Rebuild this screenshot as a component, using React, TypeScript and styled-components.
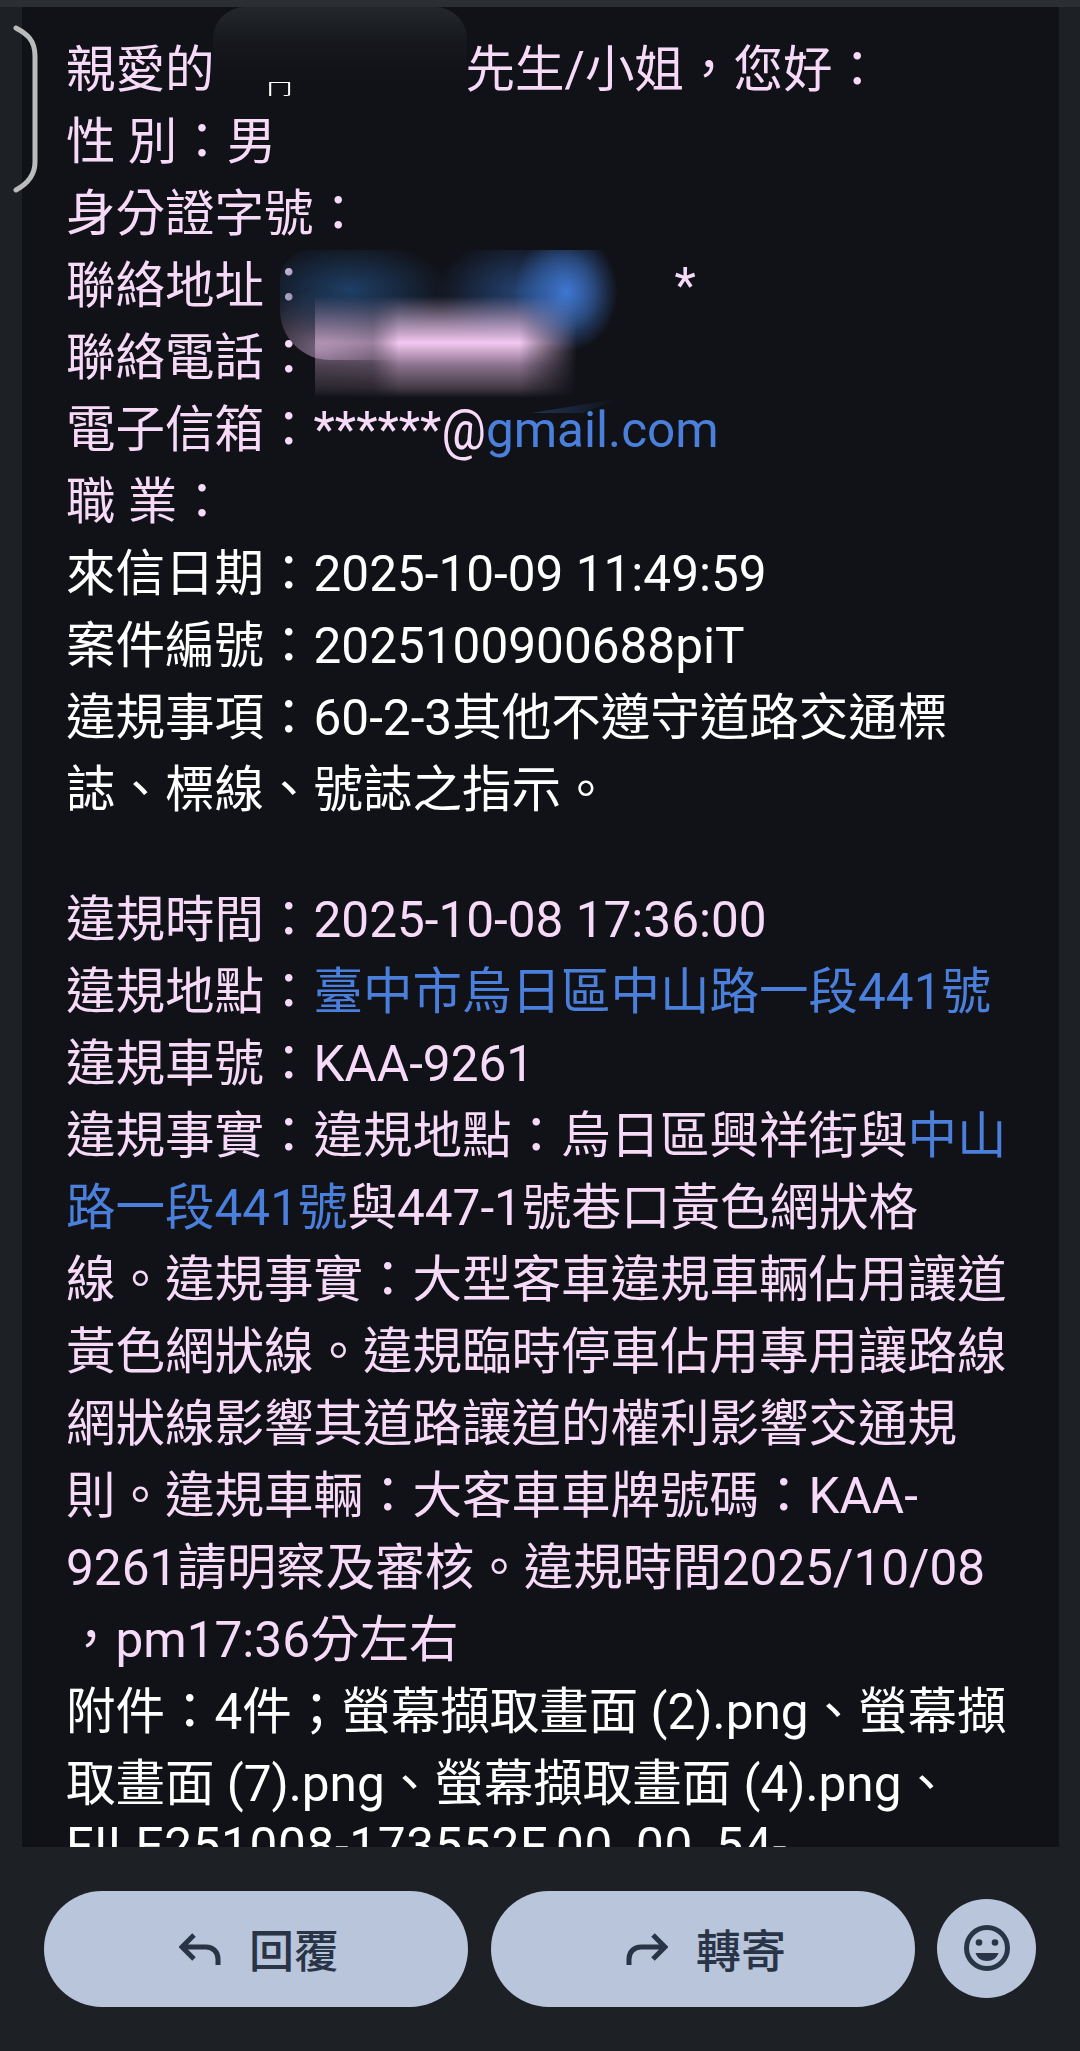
import React from 'react';
import styled, { createGlobalStyle } from 'styled-components';

const GlobalStyle = createGlobalStyle`
  html, body {
    margin: 0;
    padding: 0;
    background: #1d2025;
  }
`;

export default function App() {
  return (
    <>
      <GlobalStyle />
      <Screen>
        <TopStrip />
        <Handle width='26' height='170' viewBox='0 0 26 170'>
          <path
            d='M3 4 C14 10 22 16 22 32 V138 C22 152 14 160 3 166'
            fill='none'
            stroke='#b9bcba'
            strokeWidth='5'
            strokeLinecap='round'
          />
        </Handle>
        <Message>
          <Line>
            親愛的
            <Redacted $width={251}>
              <Remnant>冂</Remnant>
            </Redacted>
            先生/小姐，您好：
          </Line>
          <Line>性 別：男</Line>
          <Line>身分證字號：</Line>
          <Line>
            聯絡地址：
            <Redacted $width={361} />*
          </Line>
          <Line>聯絡電話：</Line>
          <Line>
            電子信箱：******<At>@</At>
            <Link>gmail.com</Link>
          </Line>
          <Line>職 業：</Line>
          <Line $white>來信日期：2025-10-09 11:49:59</Line>
          <Line $white>案件編號：2025100900688piT</Line>
          <Line $white>違規事項：60-2-3其他不遵守道路交通標</Line>
          <Line $white>誌、標線、號誌之指示。</Line>
          <BlankLine />
          <Line>違規時間：2025-10-08 17:36:00</Line>
          <Line>
            違規地點：<Link>臺中市烏日區中山路一段441號</Link>
          </Line>
          <Line>違規車號：KAA-9261</Line>
          <Line>
            違規事實：違規地點：烏日區興祥街與<Link>中山</Link>
          </Line>
          <Line>
            <Link>路一段441號</Link>與447-1號巷口黃色網狀格
          </Line>
          <Line>線。違規事實：大型客車違規車輛佔用讓道</Line>
          <Line>黃色網狀線。違規臨時停車佔用專用讓路線</Line>
          <Line>網狀線影響其道路讓道的權利影響交通規</Line>
          <Line>則。違規車輛：大客車車牌號碼：KAA-</Line>
          <Line>9261請明察及審核。違規時間2025/10/08</Line>
          <Line>，pm17:36分左右</Line>
          <Line $white>附件：4件；螢幕擷取畫面 (2).png、螢幕擷</Line>
          <Line $white>取畫面 (7).png、螢幕擷取畫面 (4).png、</Line>
          <ClippedLine $white>FILE251008-173552F.00_00_54-</ClippedLine>
          <NameMask />
          <SmudgeBlue />
          <SmudgePink />
          <SmudgeTail />
        </Message>
        <Actions>
          <PillButton>
            <svg width='42' height='34' viewBox='0 0 42 34' fill='none'>
              <path
                d='M15 3 L3 15 L15 27 M3 15 H27 C34 15 39 20 39 27 V33'
                stroke='#2a3447'
                strokeWidth='5'
              />
            </svg>
            回覆
          </PillButton>
          <PillButton>
            <svg width='42' height='34' viewBox='0 0 42 34' fill='none'>
              <path
                d='M27 3 L39 15 L27 27 M39 15 H15 C8 15 3 20 3 27 V33'
                stroke='#2a3447'
                strokeWidth='5'
              />
            </svg>
            轉寄
          </PillButton>
          <RoundButton>
            <svg width='48' height='48' viewBox='0 0 48 48' fill='none'>
              <circle cx='24' cy='24' r='20.5' stroke='#2a3447' strokeWidth='5' />
              <circle cx='16' cy='18.5' r='3.3' fill='#2a3447' />
              <circle cx='32' cy='18.5' r='3.3' fill='#2a3447' />
              <path d='M12.5 29 H35.5 C34 34 29.5 37 24 37 C18.5 37 14 34 12.5 29 Z' fill='#2a3447' />
            </svg>
          </RoundButton>
        </Actions>
      </Screen>
    </>
  );
}

const Screen = styled.div`
  position: relative;
  width: 1080px;
  height: 2051px;
  overflow: hidden;
  display: flex;
  flex-direction: column;
  background: #1d2025;
  font-family: Roboto, 'Noto Sans CJK TC', sans-serif;
`;

const TopStrip = styled.div`
  height: 7px;
  flex: none;
  background: #2b2f34;
`;

const Handle = styled.svg`
  position: absolute;
  z-index: 1;
  left: 13px;
  top: 24px;
`;

const Message = styled.div`
  position: relative;
  flex: none;
  height: 1840px;
  margin: 0 21px 0 22px;
  padding: 27px 0 0 44px;
  box-sizing: border-box;
  overflow: hidden;
  background: #111218;
`;

const Line = styled.div<{ $white?: boolean }>`
  height: 72px;
  line-height: 72px;
  font-size: 49.5px;
  white-space: pre;
  color: ${(p) => (p.$white ? '#ffffff' : '#f6daf8')};
`;

const ClippedLine = styled(Line)`
  margin-top: -10px;
  letter-spacing: 0.64px;
`;

const BlankLine = styled.div`
  height: 58px;
`;

const Link = styled.span`
  color: #4a80dc;
`;

const At = styled.span`
  display: inline-block;
  transform: scaleY(1.14);
`;

const Redacted = styled.span<{ $width: number }>`
  position: relative;
  display: inline-block;
  width: ${(p) => p.$width}px;
  height: 1px;
`;

const Remnant = styled.span`
  position: absolute;
  left: 52px;
  top: -14px;
  font-size: 26px;
  line-height: 24px;
  color: #ffffff;
  transform: scaleY(0.55);
  transform-origin: bottom;
`;

const NameMask = styled.div`
  position: absolute;
  left: 191px;
  top: 0;
  width: 254px;
  height: 73px;
  border-radius: 32px 32px 0 0;
  background: linear-gradient(#24282d, #15171c 50%, #111218);
`;

const SmudgeBlue = styled.div`
  position: absolute;
  left: 258px;
  top: 243px;
  width: 340px;
  height: 110px;
  border-radius: 30px 0 0 50px;
  background:
    radial-gradient(ellipse 52px 60px at 286px 42px, #3f78d2, rgba(63, 120, 210, 0.5) 55%, rgba(63, 120, 210, 0) 100%),
    radial-gradient(ellipse 85px 55px at 240px 42px, rgba(40, 75, 130, 0.85), rgba(40, 75, 130, 0) 100%),
    radial-gradient(ellipse 100px 50px at 70px 40px, #1f3f66, rgba(31, 63, 102, 0) 100%),
    radial-gradient(ellipse 80px 60px at 40px 100px, rgba(135, 115, 145, 0.85), rgba(125, 105, 135, 0) 100%);
`;

const SmudgePink = styled.div`
  position: absolute;
  left: 293px;
  top: 289px;
  width: 262px;
  height: 102px;
  background: linear-gradient(
    rgba(170, 150, 190, 0),
    rgba(205, 175, 215, 0.7) 26%,
    #f4c8f2 46%,
    rgba(190, 155, 190, 0.7) 68%,
    rgba(120, 100, 120, 0.5) 90%,
    rgba(110, 90, 110, 0)
  );
  mask-image: linear-gradient(
    90deg,
    rgba(0, 0, 0, 0.5),
    rgba(0, 0, 0, 0.55) 22%,
    #000 32%,
    #000 78%,
    rgba(0, 0, 0, 0.45) 90%,
    transparent
  );
`;

const SmudgeTail = styled.div`
  position: absolute;
  left: 510px;
  top: 392px;
  width: 85px;
  height: 14px;
  background: linear-gradient(90deg, rgba(47, 85, 140, 0.5), rgba(47, 85, 140, 0));
  clip-path: polygon(0 100%, 100% 0, 60% 100%);
`;

const Actions = styled.div`
  flex: 1;
  display: flex;
  align-items: center;
  padding: 0 43px 0 44px;
  gap: 23px;
`;

const PillButton = styled.div`
  flex: none;
  width: 424px;
  height: 116px;
  margin-top: -1px;
  padding-left: 6px;
  box-sizing: border-box;
  border-radius: 58px;
  display: flex;
  align-items: center;
  justify-content: center;
  gap: 28px;
  background: #b9c5db;
  color: #2a3447;
  font-size: 45px;
  font-weight: 500;
`;

const RoundButton = styled.div`
  flex: none;
  width: 99px;
  height: 99px;
  margin-left: -1px;
  margin-top: -2px;
  border-radius: 50%;
  display: flex;
  align-items: center;
  justify-content: center;
  background: #b9c5db;
`;
